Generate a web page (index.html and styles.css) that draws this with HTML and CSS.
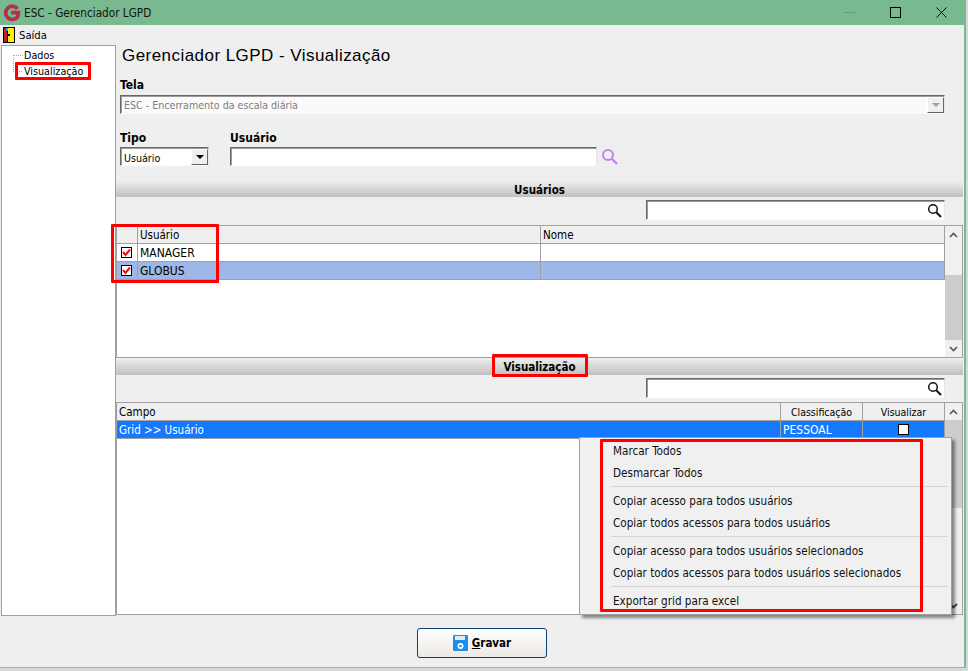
FILE: index.html
```html
<!DOCTYPE html>
<html lang="pt-BR">
<head>
<meta charset="utf-8">
<title>ESC - Gerenciador LGPD</title>
<link rel="stylesheet" href="styles.css">
</head>
<body>
<div class="window">
  <header class="titlebar">
    <svg class="logo" width="18" height="18" viewBox="0 0 18 18"><path d="M14.500 4.800A6.600 6.600 0 1 0 14.600 12.800L15.300 8.700H8" fill="none" stroke="#b5304a" stroke-width="3.800"/></svg>
    <span class="title-text">ESC - Gerenciador LGPD</span>
    <div class="win-controls">
      <span class="win-min"></span>
      <span class="win-max"></span>
      <svg class="win-close" width="11" height="11" viewBox="0 0 11 11"><path d="M.5.500 10.500 10.500M10.500.500.500 10.500" stroke="#000" stroke-width="1" fill="none"/></svg>
    </div>
  </header>
  <nav class="menubar">
    <svg class="door" width="12" height="16" viewBox="0 0 12 16"><rect width="12" height="16" fill="#000"/><rect x="1" y="1" width="3" height="14" fill="#c02020"/><rect x="5" y="1" width="6" height="14" fill="#ffee00"/><rect x="3" y="1" width="2" height="3" fill="#18a0d8"/><rect x="4" y="4" width="1" height="11" fill="#000"/><rect x="5" y="7" width="2" height="2" fill="#000"/></svg>
    <span>Saída</span>
  </nav>
  <div class="content">
    <aside class="tree">
      <div class="tree-lines"></div>
      <div class="tree-item">Dados</div>
      <div class="tree-item">Visualização</div>
    </aside>
    <main class="main">
      <h1 class="heading">Gerenciador LGPD - Visualização</h1>
      <div class="field-tela">
        <label class="field-label">Tela</label>
        <div class="combo combo-disabled">
          <span class="combo-text">ESC - Encerramento da escala diária</span>
          <span class="combo-btn"><i class="arrow arrow-grey"></i></span>
        </div>
      </div>
      <div class="field-row">
        <div class="field-tipo">
          <label class="field-label">Tipo</label>
          <div class="combo">
            <span class="combo-text">Usuário</span>
            <span class="combo-btn"><i class="arrow"></i></span>
          </div>
        </div>
        <div class="field-user">
          <label class="field-label">Usuário</label>
          <div class="field-user-row">
            <div class="input"></div>
            <svg class="search-purple" width="18" height="18" viewBox="0 0 18 18"><circle cx="7" cy="7" r="5" fill="none" stroke="#c583ea" stroke-width="2"/><path d="M10.500 10.500 16 16" stroke="#c583ea" stroke-width="2.400"/></svg>
          </div>
        </div>
      </div>

      <section class="sec sec-users">
        <div class="sec-bar">Usuários</div>
        <div class="search-row search-row-users">
          <div class="input search-input">
            <svg width="15" height="15" viewBox="0 0 15 15"><circle cx="6" cy="6" r="4.300" fill="none" stroke="#111" stroke-width="1.500"/><path d="M9 9 14 14" stroke="#111" stroke-width="2"/></svg>
          </div>
        </div>
        <div class="grid-box grid-box-users">
          <div class="grid-body">
            <div class="row row-head users-cols">
              <div class="cell"></div><div class="cell">Usuário</div><div class="cell">Nome</div>
            </div>
            <div class="row users-cols">
              <div class="cell cell-check"><span class="check"><svg width="9" height="9" viewBox="0 0 9 9"><path d="M1 4 3.500 7 8 1.500" stroke="#e81010" stroke-width="2" fill="none"/></svg></span></div><div class="cell cell-caps">MANAGER</div><div class="cell"></div>
            </div>
            <div class="row row-soft users-cols">
              <div class="cell cell-check"><span class="check"><svg width="9" height="9" viewBox="0 0 9 9"><path d="M1 4 3.500 7 8 1.500" stroke="#e81010" stroke-width="2" fill="none"/></svg></span></div><div class="cell cell-caps">GLOBUS</div><div class="cell"></div>
            </div>
          </div>
          <div class="scrollbar sb-users">
            <span class="sb-btn"><svg width="9" height="6" viewBox="0 0 9 6"><path d="M1 5 4.500 1.500 8 5" stroke="#555" stroke-width="1.600" fill="none"/></svg></span>
            <span class="sb-space"></span>
            <span class="sb-thumb"></span>
            <span class="sb-btn"><svg width="9" height="6" viewBox="0 0 9 6"><path d="M1 1 4.500 4.500 8 1" stroke="#555" stroke-width="1.600" fill="none"/></svg></span>
          </div>
        </div>
      </section>

      <section class="sec sec-view">
        <div class="sec-bar sec-bar-view">Visualização</div>
        <div class="search-row">
          <div class="input search-input">
            <svg width="15" height="15" viewBox="0 0 15 15"><circle cx="6" cy="6" r="4.300" fill="none" stroke="#111" stroke-width="1.500"/><path d="M9 9 14 14" stroke="#111" stroke-width="2"/></svg>
          </div>
        </div>
        <div class="grid-box grid-box-view">
          <div class="grid-body">
            <div class="row row-head view-cols">
              <div class="cell">Campo</div><div class="cell cell-c">Classificação</div><div class="cell cell-c">Visualizar</div>
            </div>
            <div class="row row-strong view-cols">
              <div class="cell">Grid &gt;&gt; Usuário</div><div class="cell cell-caps">PESSOAL</div><div class="cell cell-c"><span class="box"></span></div>
            </div>
          </div>
          <div class="scrollbar sb-view">
            <span class="sb-btn"><svg width="9" height="6" viewBox="0 0 9 6"><path d="M1 5 4.500 1.500 8 5" stroke="#555" stroke-width="1.600" fill="none"/></svg></span>
            <span class="sb-thumb"></span>
            <span class="sb-space"></span>
            <span class="sb-btn"><svg width="9" height="6" viewBox="0 0 9 6"><path d="M1 1 4.500 4.500 8 1" stroke="#444" stroke-width="1.800" fill="none"/></svg></span>
          </div>
        </div>
      </section>
    </main>
  </div>
  <footer class="footer">
    <button class="btn-save" type="button">
      <svg width="15" height="16" viewBox="0 0 15 16"><rect width="15" height="16" rx="1" fill="#1f8ee8"/><rect x="2" y="1" width="10" height="4" fill="#d8ecfb"/><circle cx="7.500" cy="11" r="3" fill="#fff"/><circle cx="7.500" cy="11" r="1.300" fill="#1f8ee8"/></svg>
      <span><u>G</u>ravar</span>
    </button>
  </footer>

  <div class="ctx-menu">
    <div class="ctx-item">Marcar Todos</div>
    <div class="ctx-item">Desmarcar Todos</div>
    <div class="ctx-sep"></div>
    <div class="ctx-item">Copiar acesso para todos usuários</div>
    <div class="ctx-item">Copiar todos acessos para todos usuários</div>
    <div class="ctx-sep"></div>
    <div class="ctx-item">Copiar acesso para todos usuários selecionados</div>
    <div class="ctx-item">Copiar todos acessos para todos usuários selecionados</div>
    <div class="ctx-sep"></div>
    <div class="ctx-item">Exportar grid para excel</div>
  </div>

  <div class="mark mark-tree"></div>
  <div class="mark mark-grid"></div>
  <div class="mark mark-sec"></div>
  <div class="mark mark-menu"></div>
</div>
</body>
</html>
```
FILE: styles.css
```css
* { box-sizing: border-box; }
html, body { margin: 0; padding: 0; height: 671px; overflow: hidden; background: #d8d8d8; }
body { font-family: "DejaVu Sans", sans-serif; font-stretch: condensed; font-size: 11px; color: #000; }

.window { position: relative; width: 966px; height: 668px; display: flex; flex-direction: column; background: #efefef; border-right: 2px solid #78b98f; border-bottom: 1px solid #8fbf9f; }

.titlebar { height: 25px; flex: none; display: flex; align-items: center; background: #78b98f; padding-left: 3px; }
.logo { margin-right: 3px; }
.title-text { font-size: 11.700px; color: #111; }
.win-controls { margin-left: auto; display: flex; align-items: center; }
.win-min { width: 10px; height: 1px; background: #5f9a76; margin-right: 35px; }
.win-max { width: 11px; height: 11px; border: 1px solid #000; margin-right: 35px; }
.win-close { margin-right: 17px; }

.menubar { height: 20px; flex: none; display: flex; align-items: center; gap: 4px; padding-left: 3px; font-size: 11.200px; }

.content { flex: 1; display: flex; min-height: 0; }
.tree { position: relative; width: 115px; margin-left: 1px; flex: none; background: #fff; border: 1px solid #a0a0a0; padding: 2px 0 0 22px; }
.tree-item { height: 16px; line-height: 16px; font-size: 10.700px; }
.tree-lines { position: absolute; left: 11px; top: 9px; width: 9px; height: 17px; border-left: 1px dotted #aaa; border-bottom: 1px dotted #aaa; }
.tree-lines::before { content: ""; position: absolute; left: 0; top: 0; width: 9px; border-top: 1px dotted #aaa; }

.main { flex: 1; min-width: 0; display: flex; flex-direction: column; margin-right: 1px; }
.heading { margin: 0 0 0 6px; height: 20px; padding-top: 1px; font: normal 17px/20px "Liberation Sans", sans-serif; letter-spacing: .45px; }
.field-label { display: block; height: 13px; line-height: 13px; font-size: 12px; font-weight: bold; }
.field-tela { margin: 14px 18px 0 4px; }
.field-tela .field-label { margin-bottom: 3px; }
.combo { display: flex; height: 19px; background: #fff; border: 1px solid; border-color: #696969 #e4e4e4 #fafafa #696969; box-shadow: inset 1px 1px 0 #9a9a9a; padding: 1px 0 0 1px; align-items: stretch; }
.combo-text { flex: 1; padding-left: 2px; line-height: 17px; font-size: 10.600px; }
.field-tipo .combo-text { line-height: 19px; }
.combo-disabled { background: #fafafa; }
.combo-disabled .combo-text { color: #7d7d7d; }
.combo-btn { width: 17px; background: #efefef; border: 1px solid; border-color: #fff #666 #666 #fff; display: flex; align-items: center; justify-content: center; }
.arrow { width: 0; height: 0; border-left: 4px solid transparent; border-right: 4px solid transparent; border-top: 4px solid #000; }
.arrow-grey { border-top-color: #a0a0a0; }

.field-row { display: flex; margin: 18px 0 0 4px; }
.field-tipo { width: 89px; margin-right: 21px; }
.field-tipo .field-label, .field-user .field-label { margin-bottom: 2px; }
.field-user { flex: none; }
.field-user-row { display: flex; align-items: flex-start; }
.input { height: 19px; width: 367px; background: #fff; border: 1px solid; border-color: #696969 #e4e4e4 #fafafa #696969; box-shadow: inset 1px 1px 0 #9a9a9a; }
.search-purple { margin: 1px 0 0 4px; }

.sec-users { margin-top: 15px; }
.sec-bar { height: 16px; line-height: 18px; text-align: center; font-weight: bold; font-size: 11.500px; background: linear-gradient(#efefef, #bfbfbf); }
.sec-bar-view { height: 17px; line-height: 18px; }
.search-row { display: flex; justify-content: flex-end; padding: 3px 18px 0 0; height: 27px; }
.search-row-users { height: 28px; }
.search-input { width: 299px; height: 20px; display: flex; justify-content: flex-end; align-items: center; padding-right: 2px; }

.grid-box { display: flex; border: 1px solid #a0a0a0; background: #fff; }
.grid-box-users { height: 133px; }
.grid-box-view { height: 213px; }
.grid-body { flex: 1; min-width: 0; }
.row { display: grid; height: 18px; border-bottom: 1px solid #a0a0a0; border-right: 1px solid #a0a0a0; }
.users-cols { grid-template-columns: 20px 403px 1fr; }
.view-cols { grid-template-columns: 663px 82px 1fr; }
.cell { padding-left: 2px; line-height: 18px; font-size: 11.500px; border-left: 1px solid #a0a0a0; white-space: nowrap; overflow: hidden; }
.cell:first-child { border-left: 0; }
.cell-caps { font-size: 12px; }
.cell-c { text-align: center; padding-left: 0; font-size: 10.500px; }
.row-head { background: #efefef; }
.row-soft { background: #9db8e8; }
.row-strong { background: #1479ff; color: #fff; }
.cell-check { padding: 3px 0 0 4px; display: block; }
.check { display: flex; align-items: center; justify-content: center; width: 11px; height: 11px; background: #fff; border: 1px solid #000; }
.box { display: inline-block; width: 11px; height: 11px; margin-top: 3px; background: #fff; border: 1px solid #000; }

.scrollbar { flex: none; width: 17px; background: #f0f0f0; display: flex; flex-direction: column; }
.sb-btn { height: 17px; flex: none; display: flex; justify-content: center; align-items: center; background: #f0f0f0; }
.sb-thumb { flex: none; background: #cdcdcd; }
.sb-space { flex: 1; }
.sb-users .sb-thumb { height: 65px; }
.sb-view .sb-thumb { height: 88px; }

.footer { height: 51px; flex: none; display: flex; justify-content: center; align-items: flex-start; padding: 12px 0 0 0; }
.btn-save { width: 130px; height: 30px; display: flex; align-items: center; justify-content: center; gap: 4px; border: 1px solid #0a3f78; border-radius: 3px; background: linear-gradient(#fff, #ece9e6); font: bold 11.500px "DejaVu Sans", sans-serif; font-stretch: condensed; color: #000; }

.ctx-menu { position: absolute; left: 579px; top: 437px; width: 373px; height: 178px; padding: 2px 3px 0 31px; background: #f0f0f0; border: 1px solid #a0a0a0; box-shadow: 3px 3px 3px rgba(0,0,0,.45); }
.ctx-item { height: 22px; line-height: 22px; padding-left: 2px; font-size: 11.600px; color: #111; white-space: nowrap; }
.ctx-sep { height: 6px; padding-top: 2px; }
.ctx-sep::before { content: ""; display: block; height: 1px; background: #d4d4d4; }

.mark { position: absolute; border: 3px solid #f00; border-radius: 1px; pointer-events: none; }
.mark-tree { left: 15px; top: 62px; width: 76px; height: 18px; }
.mark-grid { left: 111px; top: 224px; width: 108px; height: 59px; }
.mark-sec { left: 492px; top: 354px; width: 96px; height: 23px; }
.mark-menu { left: 600px; top: 439px; width: 323px; height: 173px; }
```
